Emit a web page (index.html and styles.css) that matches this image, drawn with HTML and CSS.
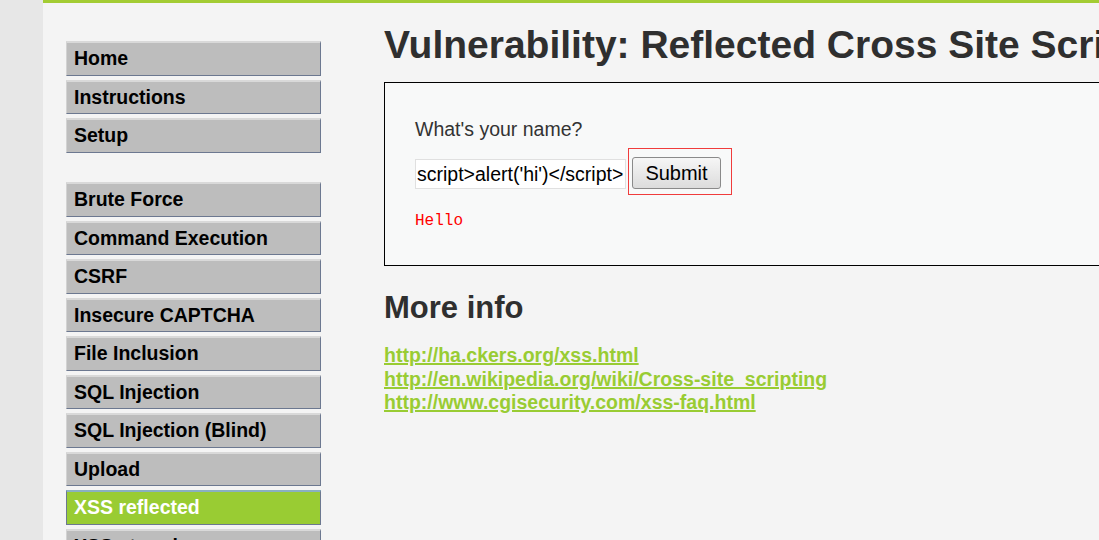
FILE: index.html
```html
<!DOCTYPE html>
<html>
<head>
<meta charset="utf-8">
<link rel="stylesheet" href="styles.css">
</head>
<body>
<div class="page">
  <div class="strip"></div>
  <div class="main">
    <nav class="menu">
      <ul class="menu-group">
        <li class="item">Home</li>
        <li class="item">Instructions</li>
        <li class="item">Setup</li>
      </ul>
      <ul class="menu-group">
        <li class="item">Brute Force</li>
        <li class="item">Command Execution</li>
        <li class="item">CSRF</li>
        <li class="item">Insecure CAPTCHA</li>
        <li class="item">File Inclusion</li>
        <li class="item">SQL Injection</li>
        <li class="item">SQL Injection (Blind)</li>
        <li class="item">Upload</li>
        <li class="item selected">XSS reflected</li>
        <li class="item">XSS stored</li>
      </ul>
    </nav>
    <div class="content">
      <h1 class="title">Vulnerability: Reflected Cross Site Scripting (XSS)</h1>
      <div class="vuln-box">
        <form class="form">
          <p class="label">What's your name?</p>
          <div class="row">
            <input class="name-input" type="text" value="script>alert('hi')</script>">
            <span class="highlight"><button class="submit" type="button">Submit</button></span>
          </div>
        </form>
        <pre class="hello">Hello</pre>
      </div>
      <h2 class="more">More info</h2>
      <ul class="links">
        <li><a class="link" href="#">http://ha.ckers.org/xss.html</a></li>
        <li><a class="link" href="#">http://en.wikipedia.org/wiki/Cross-site_scripting</a></li>
        <li><a class="link" href="#">http://www.cgisecurity.com/xss-faq.html</a></li>
      </ul>
    </div>
  </div>
</div>
</body>
</html>
```

FILE: styles.css
```css
html, body {
  margin: 0;
  padding: 0;
  height: 100%;
  overflow: hidden;
}
body {
  background: #f4f4f4;
  font-family: "Liberation Sans", Arial, sans-serif;
  color: #2f2f2f;
}
.page {
  display: flex;
  height: 540px;
  overflow: hidden;
}
.strip {
  width: 43px;
  flex: none;
  background: #e7e7e7;
}
.main {
  flex: 1;
  display: flex;
  border-top: 3px solid #a3cc33;
  min-width: 0;
}
.menu {
  flex: none;
  width: 255px;
  margin-left: 23px;
  padding-top: 38px;
}
.menu-group {
  list-style: none;
  margin: 0 0 29.5px 0;
  padding: 0;
}
.item {
  box-sizing: border-box;
  height: 34.5px;
  margin-bottom: 4px;
  padding-left: 7px;
  line-height: 31px;
  font-size: 19.5px;
  font-weight: bold;
  color: #000;
  background: #bdbdbd;
  border-top: 2px solid #d9d9d9;
  border-left: 1px solid #d2d2d2;
  border-right: 1px solid #6c7890;
  border-bottom: 1px solid #6c7890;
  white-space: nowrap;
  overflow: hidden;
}
.item.selected {
  background: #99cc33;
  color: #fff;
  border: 1px solid #6c7890;
  border-top: 2px solid #8ab0c0;
}
.content {
  margin-left: 63px;
  flex: 1;
  min-width: 0;
  overflow: hidden;
}
.title {
  margin: 20px 0 0 0;
  font-size: 39px;
  line-height: 44px;
  font-weight: bold;
  color: #2f2f2f;
  white-space: nowrap;
}
.vuln-box {
  margin-top: 15px;
  width: 1000px;
  height: 182px;
  border: 1px solid #000;
  background: #f8f9f9;
  padding: 0 0 0 30px;
  box-sizing: content-box;
}
.form { margin: 0; }
.label {
  margin: 33px 0 0 0;
  font-size: 19.5px;
  line-height: 26px;
  color: #333;
}
.row {
  display: flex;
  align-items: flex-start;
  margin-top: 6px;
}
.name-input {
  box-sizing: border-box;
  width: 211px;
  height: 30px;
  margin: 11px 0 0 0;
  padding: 0 1px;
  border: 1px solid #e0e0e0;
  background: #fff;
  font-family: "Liberation Sans", Arial, sans-serif;
  font-size: 19.5px;
  color: #000;
  outline: none;
}
.highlight {
  display: inline-block;
  margin-left: 2px;
  padding: 8px 10px 5px 3px;
  border: 1px solid #f03c3c;
}
.submit {
  box-sizing: border-box;
  display: block;
  width: 89px;
  height: 32px;
  padding: 0;
  border: 1px solid #8a8a8a;
  border-radius: 3px;
  background: linear-gradient(#f6f6f6, #dcdcdc);
  font-family: "Liberation Sans", Arial, sans-serif;
  font-size: 20px;
  color: #000;
}
.hello {
  margin: 16px 0 0 0;
  font-family: "Liberation Mono", "Courier New", monospace;
  font-size: 16px;
  line-height: 20px;
  color: #ff0000;
}
.more {
  margin: 24px 0 0 0;
  font-size: 31px;
  line-height: 36px;
  font-weight: bold;
  color: #2f2f2f;
}
.links {
  list-style: none;
  margin: 18px 0 0 0;
  padding: 0;
}
.links li {
  font-size: 19.5px;
  line-height: 23.5px;
}
.link {
  font-size: 19.5px;
  font-weight: bold;
  color: #99cc33;
  text-decoration: underline;
  text-decoration-thickness: 2px;
}
```
